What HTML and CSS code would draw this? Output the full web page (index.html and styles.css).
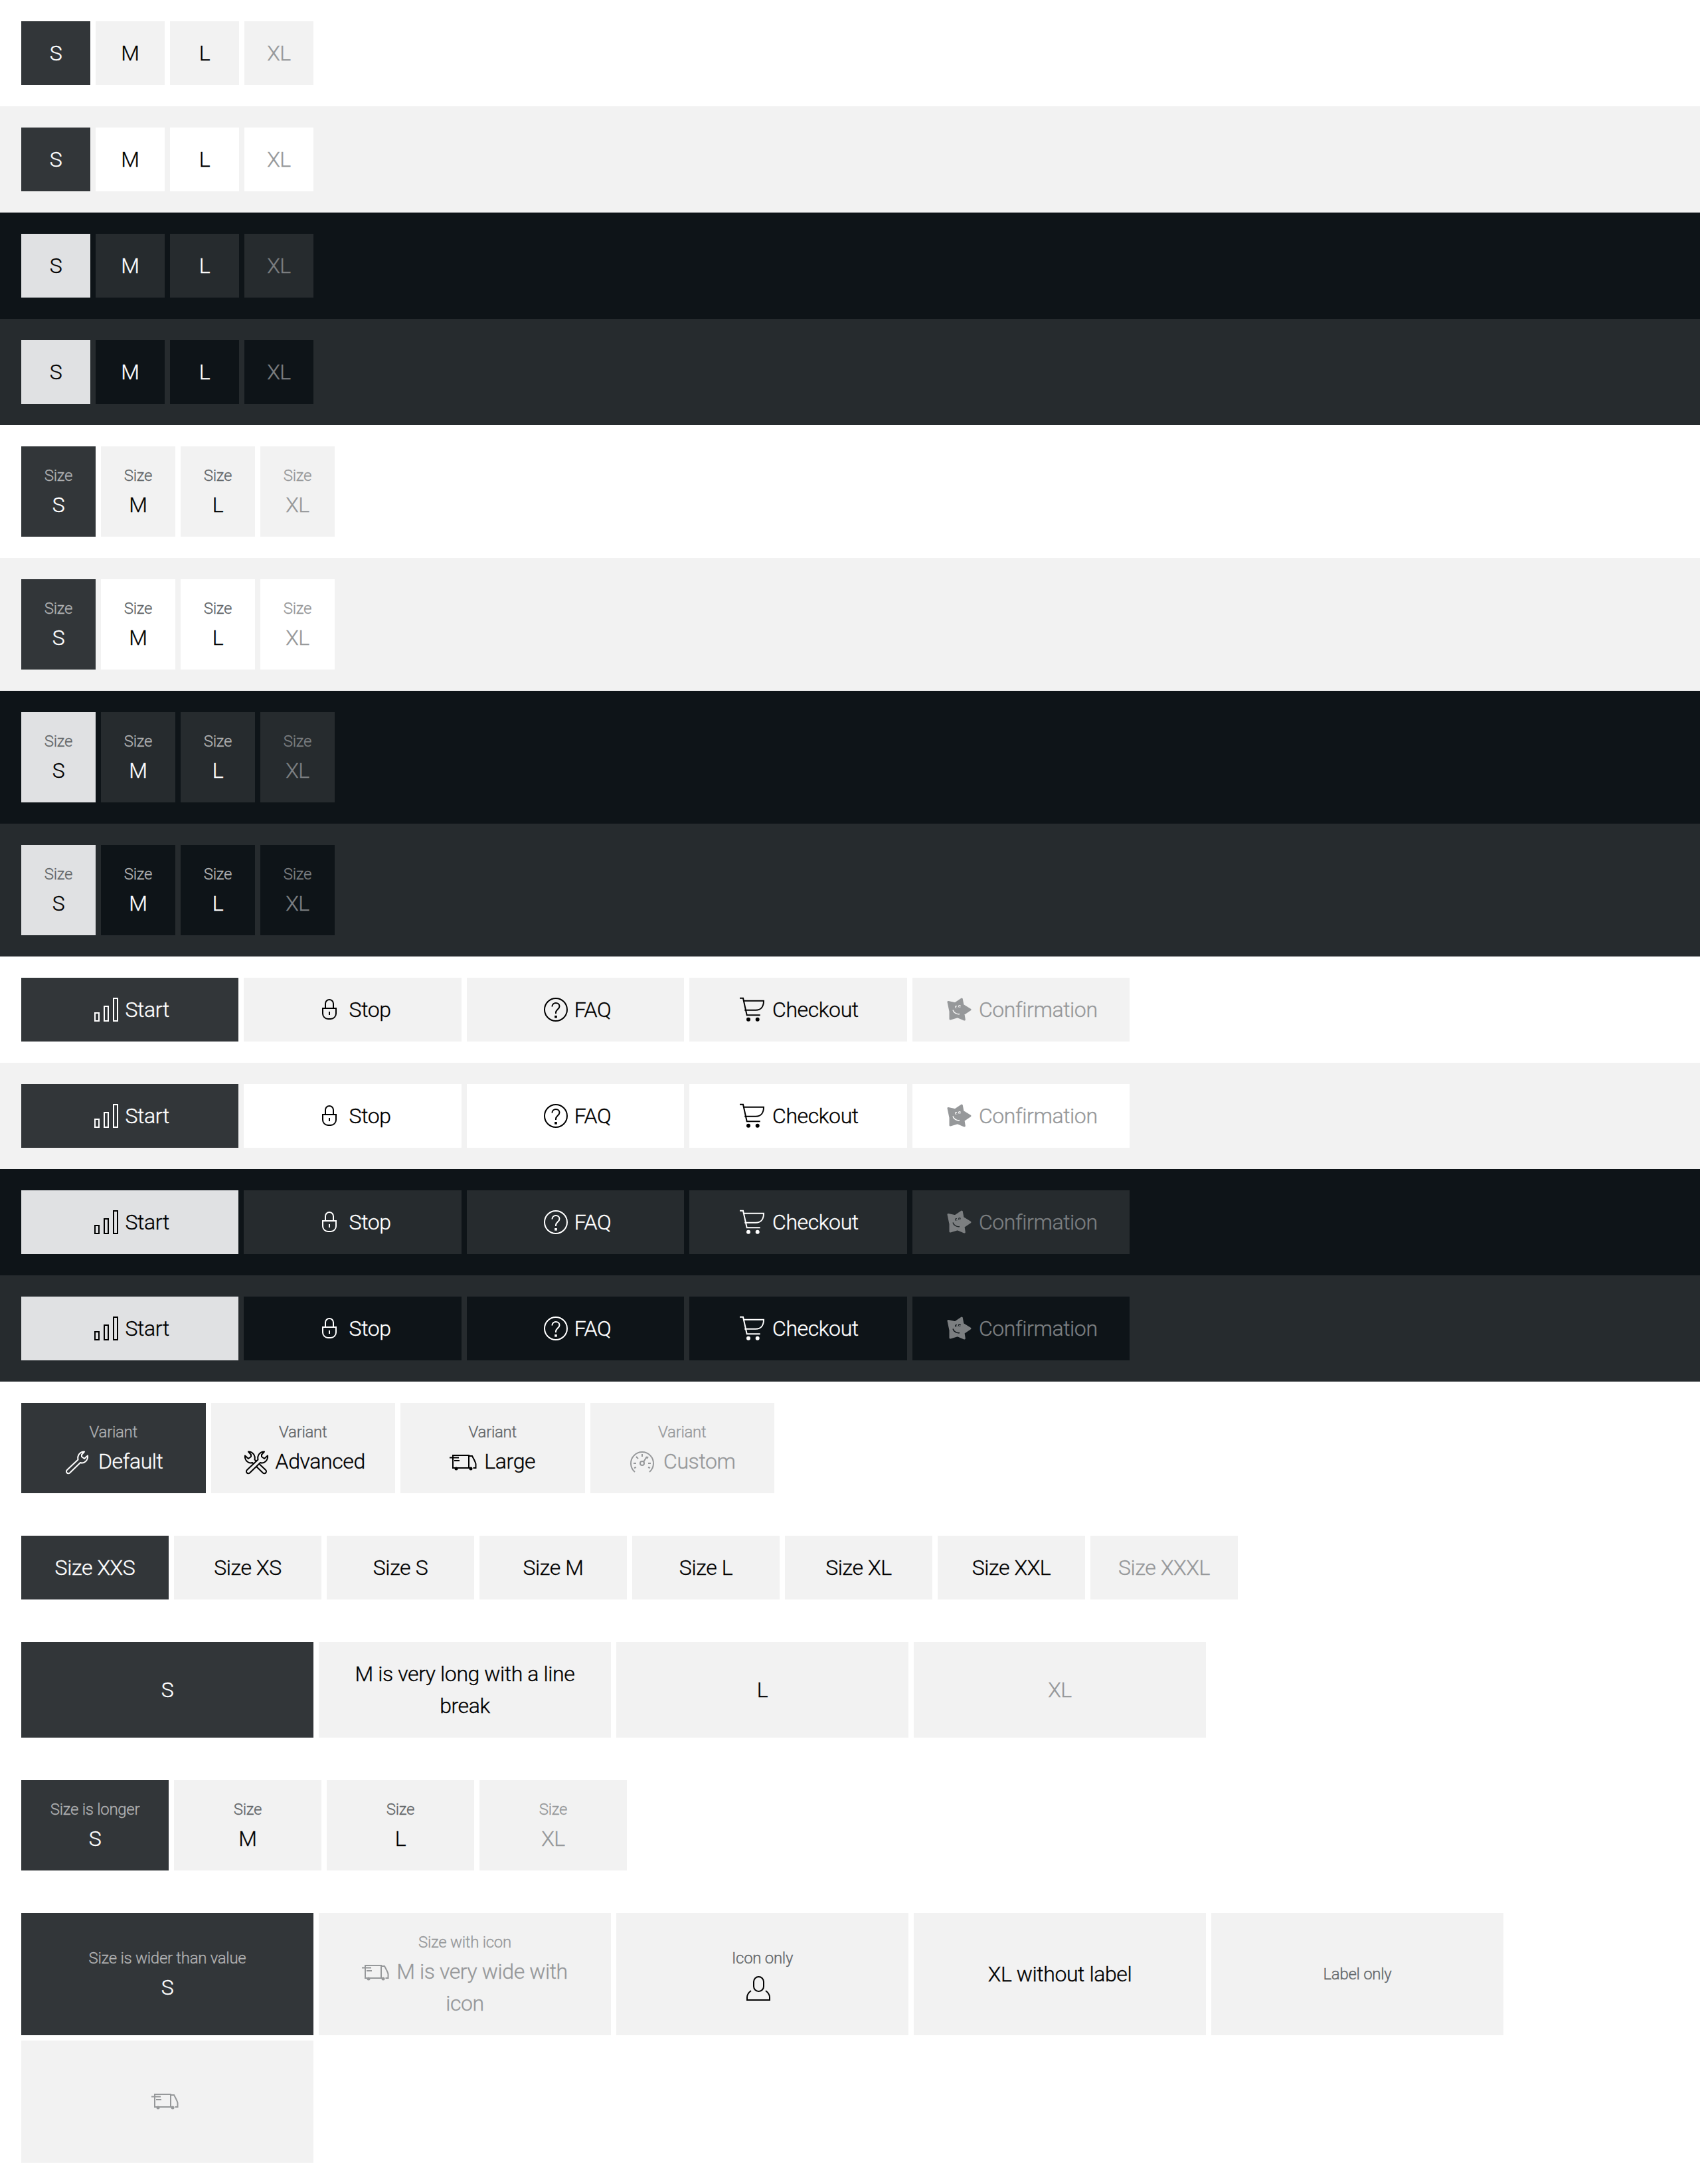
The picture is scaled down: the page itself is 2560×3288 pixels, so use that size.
FILE: index.html

```html
<!DOCTYPE html>
<html>
<head>
  <title>Segmented controls</title>
  <link rel="stylesheet" href="styles.css">
</head>
<body>
  <svg class="sprite" xmlns="http://www.w3.org/2000/svg">
    <symbol id="i-bars" viewBox="0 0 48 48"><rect x="6" y="29" width="6" height="12"/><rect x="20" y="19" width="6" height="22"/><rect x="34" y="7" width="6" height="34"/></symbol>
    <symbol id="i-lock" viewBox="0 0 48 48"><path d="M12 22h20v8a8 8 0 0 1-8 8h-4a8 8 0 0 1-8-8z"/><path d="M16 22v-7a6 6 0 0 1 12 0v7"/><path d="M22 27v5"/></symbol>
    <symbol id="i-help" viewBox="0 0 48 48"><circle cx="24" cy="24" r="17"/><path d="M18.500 19.500c0-3.500 2.500-5.500 5.500-5.500s5.500 2 5.500 5c0 4.500-5.500 4.500-5.500 9.500v1.500"/><path class="solid" d="M22.200 33h3.600v3.600h-3.600z"/></symbol>
    <symbol id="i-cart" viewBox="0 0 48 48"><path d="M3 6.700h5l5.700 25.600h20"/><path d="M8.700 10.700H39c0 7-3 14-12 14H10.300"/><circle class="solid" cx="16" cy="38.700" r="3"/><circle class="solid" cx="29.700" cy="38.700" r="3"/></symbol>
    <symbol id="i-star" viewBox="0 0 48 48"><path class="star" d="M6 12.500l10.300 2.200L26.300 8l1.700 9.300L39 24l-10 6.700 1.300 8.300-10.600-4.300L9 38V26.700z"/><circle class="hole" cx="18" cy="20" r="3"/><circle class="hole" cx="23" cy="19" r="3"/><circle class="solid" cx="18.500" cy="20.500" r="1.200"/><circle class="solid" cx="23.500" cy="19.500" r="1.200"/><path class="smile" d="M13 24.500c1 4 6 7 10 6"/></symbol>
    <symbol id="i-wrench" viewBox="0 0 48 48"><path class="hole" d="M5 37l16.500-15.500C20 15 25 9 31 9.500L27 14v3l4 3 5-4.500c1 6.500-5 12.500-11 10.500L9 41.500a3 3 0 0 1-4-4.500z"/></symbol>
    <symbol id="i-tools" viewBox="0 0 48 48"><path class="hole" transform="matrix(-1 0 0 1 42 0)" d="M5 37l16.500-15.500C20 15 25 9 31 9.500L27 14v3l4 3 5-4.500c1 6.500-5 12.500-11 10.500L9 41.500a3 3 0 0 1-4-4.500z"/><path class="hole" transform="translate(4 0)" d="M5 37l16.500-15.500C20 15 25 9 31 9.500L27 14v3l4 3 5-4.500c1 6.500-5 12.500-11 10.500L9 41.500a3 3 0 0 1-4-4.500z"/></symbol>
    <symbol id="i-truck" viewBox="0 0 48 48"><path d="M0 18.500h14M5 18.500V15h24v19M5 18.500V34h27M7 23h8"/><path d="M29 16h5c2 4 5 9 5.500 12v6h-4"/><circle class="solid" cx="10" cy="35" r="2.500"/><circle class="solid" cx="32" cy="35" r="2.500"/></symbol>
    <symbol id="i-gauge" viewBox="0 0 48 48"><path d="M9 40a17 17 0 1 1 22 0"/><path d="M20 13v4M11 17l3 3M7 27h4M29 17l-2 3M33 27h-4M8 34l3-1M32 34l-3-1"/><circle cx="20" cy="27" r="3"/><path d="M22 25l5-8"/></symbol>
    <symbol id="i-user" viewBox="0 0 48 48"><rect x="13" y="8" width="15" height="22" rx="7.500"/><path d="M9 29c-4 3-6 7-6 10v4h34v-4c0-3-2-7-6-10"/></symbol>
  </svg>

  <!-- plain values -->
  <section class="row theme-light"><div class="group cols-basic">
    <button class="btn is-selected">S</button><button class="btn">M</button><button class="btn">L</button><button class="btn is-disabled">XL</button>
  </div></section>
  <section class="row theme-light-surface"><div class="group cols-basic">
    <button class="btn is-selected">S</button><button class="btn">M</button><button class="btn">L</button><button class="btn is-disabled">XL</button>
  </div></section>
  <section class="row theme-dark"><div class="group cols-basic">
    <button class="btn is-selected">S</button><button class="btn">M</button><button class="btn">L</button><button class="btn is-disabled">XL</button>
  </div></section>
  <section class="row theme-dark-surface"><div class="group cols-basic">
    <button class="btn is-selected">S</button><button class="btn">M</button><button class="btn">L</button><button class="btn is-disabled">XL</button>
  </div></section>

  <!-- with label -->
  <section class="row theme-light"><div class="group cols-label">
    <button class="btn has-label is-selected"><span class="label">Size</span>S</button><button class="btn has-label"><span class="label">Size</span>M</button><button class="btn has-label"><span class="label">Size</span>L</button><button class="btn has-label is-disabled"><span class="label">Size</span>XL</button>
  </div></section>
  <section class="row theme-light-surface"><div class="group cols-label">
    <button class="btn has-label is-selected"><span class="label">Size</span>S</button><button class="btn has-label"><span class="label">Size</span>M</button><button class="btn has-label"><span class="label">Size</span>L</button><button class="btn has-label is-disabled"><span class="label">Size</span>XL</button>
  </div></section>
  <section class="row theme-dark"><div class="group cols-label">
    <button class="btn has-label is-selected"><span class="label">Size</span>S</button><button class="btn has-label"><span class="label">Size</span>M</button><button class="btn has-label"><span class="label">Size</span>L</button><button class="btn has-label is-disabled"><span class="label">Size</span>XL</button>
  </div></section>
  <section class="row theme-dark-surface"><div class="group cols-label">
    <button class="btn has-label is-selected"><span class="label">Size</span>S</button><button class="btn has-label"><span class="label">Size</span>M</button><button class="btn has-label"><span class="label">Size</span>L</button><button class="btn has-label is-disabled"><span class="label">Size</span>XL</button>
  </div></section>

  <!-- with icon -->
  <section class="row theme-light"><div class="group cols-icon">
    <button class="btn is-selected"><svg class="icon"><use href="#i-bars"/></svg>Start</button><button class="btn"><svg class="icon"><use href="#i-lock"/></svg>Stop</button><button class="btn"><svg class="icon"><use href="#i-help"/></svg>FAQ</button><button class="btn"><svg class="icon"><use href="#i-cart"/></svg>Checkout</button><button class="btn is-disabled"><svg class="icon"><use href="#i-star"/></svg>Confirmation</button>
  </div></section>
  <section class="row theme-light-surface"><div class="group cols-icon">
    <button class="btn is-selected"><svg class="icon"><use href="#i-bars"/></svg>Start</button><button class="btn"><svg class="icon"><use href="#i-lock"/></svg>Stop</button><button class="btn"><svg class="icon"><use href="#i-help"/></svg>FAQ</button><button class="btn"><svg class="icon"><use href="#i-cart"/></svg>Checkout</button><button class="btn is-disabled"><svg class="icon"><use href="#i-star"/></svg>Confirmation</button>
  </div></section>
  <section class="row theme-dark"><div class="group cols-icon">
    <button class="btn is-selected"><svg class="icon"><use href="#i-bars"/></svg>Start</button><button class="btn"><svg class="icon"><use href="#i-lock"/></svg>Stop</button><button class="btn"><svg class="icon"><use href="#i-help"/></svg>FAQ</button><button class="btn"><svg class="icon"><use href="#i-cart"/></svg>Checkout</button><button class="btn is-disabled"><svg class="icon"><use href="#i-star"/></svg>Confirmation</button>
  </div></section>
  <section class="row theme-dark-surface"><div class="group cols-icon">
    <button class="btn is-selected"><svg class="icon"><use href="#i-bars"/></svg>Start</button><button class="btn"><svg class="icon"><use href="#i-lock"/></svg>Stop</button><button class="btn"><svg class="icon"><use href="#i-help"/></svg>FAQ</button><button class="btn"><svg class="icon"><use href="#i-cart"/></svg>Checkout</button><button class="btn is-disabled"><svg class="icon"><use href="#i-star"/></svg>Confirmation</button>
  </div></section>

  <!-- variants and edge cases -->
  <section class="row theme-light"><div class="group cols-variant">
    <button class="btn has-label is-selected"><span class="label">Variant</span><svg class="icon"><use href="#i-wrench"/></svg>Default</button>
    <button class="btn has-label"><span class="label">Variant</span><svg class="icon"><use href="#i-tools"/></svg>Advanced</button>
    <button class="btn has-label"><span class="label">Variant</span><svg class="icon"><use href="#i-truck"/></svg>Large</button>
    <button class="btn has-label is-disabled"><span class="label">Variant</span><svg class="icon"><use href="#i-gauge"/></svg>Custom</button>
  </div></section>
  <section class="row theme-light"><div class="group cols-size">
    <button class="btn is-selected">Size XXS</button><button class="btn">Size XS</button><button class="btn">Size S</button><button class="btn">Size M</button><button class="btn">Size L</button><button class="btn">Size XL</button><button class="btn">Size XXL</button><button class="btn is-disabled">Size XXXL</button>
  </div></section>
  <section class="row theme-light"><div class="group cols-wide">
    <button class="btn is-selected">S</button><button class="btn">M is very long with a line break</button><button class="btn">L</button><button class="btn is-disabled">XL</button>
  </div></section>
  <section class="row theme-light"><div class="group cols-size">
    <button class="btn has-label is-selected"><span class="label">Size is longer</span>S</button><button class="btn has-label"><span class="label">Size</span>M</button><button class="btn has-label"><span class="label">Size</span>L</button><button class="btn has-label is-disabled"><span class="label">Size</span>XL</button>
  </div></section>
  <section class="row theme-light"><div class="group cols-wide wrap-five">
    <button class="btn has-label is-selected"><span class="label">Size is wider than value</span>S</button>
    <button class="btn has-label is-disabled"><span class="label">Size with icon</span><svg class="icon"><use href="#i-truck"/></svg>M is very wide with icon</button>
    <button class="btn has-label"><span class="label">Icon only</span><svg class="icon"><use href="#i-user"/></svg></button>
    <button class="btn">XL without label</button>
    <button class="btn has-label"><span class="label">Label only</span></button>
    <button class="btn is-disabled"><svg class="icon icon-alone"><use href="#i-truck"/></svg></button>
  </div></section>
</body>
</html>
```

FILE: styles.css

```css
* { box-sizing: border-box; }
body { margin: 0; font-family: Roboto, "Liberation Sans", sans-serif; }
.sprite { display: none; }

.row { padding: 32px; background: var(--canvas); }
.theme-light { --canvas: #fff; --bg: #f2f2f2; --fg: #000; --sel-bg: #323639; --sel-fg: #fff; --muted: #626669; --sel-muted: #b0b1b2; --off: #96989a; }
.theme-light-surface { --canvas: #f2f2f2; --bg: #fff; --fg: #000; --sel-bg: #323639; --sel-fg: #fff; --muted: #626669; --sel-muted: #b0b1b2; --off: #96989a; }
.theme-dark { --canvas: #0e1418; --bg: #262b2e; --fg: #fff; --sel-bg: #e0e1e3; --sel-fg: #000; --muted: #b0b1b2; --sel-muted: #626669; --off: #7c7f81; }
.theme-dark-surface { --canvas: #262b2e; --bg: #0e1418; --fg: #fff; --sel-bg: #e0e1e3; --sel-fg: #000; --muted: #b0b1b2; --sel-muted: #626669; --off: #7c7f81; }

.group { display: grid; gap: 8px; grid-auto-rows: 1fr; }
.cols-basic { grid-template-columns: repeat(4, 104px); }
.cols-label { grid-template-columns: repeat(4, 112px); }
.cols-icon { grid-template-columns: repeat(5, 327.4px); }
.cols-variant { grid-template-columns: repeat(4, 277.5px); }
.cols-size { grid-template-columns: repeat(8, 222px); }
.cols-wide { grid-template-columns: repeat(4, 440px); }
.wrap-five { grid-template-columns: repeat(5, 440px); }

.btn {
  --text: var(--fg);
  --text-muted: var(--muted);
  --face: var(--bg);
  display: block;
  padding: 24px 8px;
  border: 0;
  background: var(--face);
  color: var(--text);
  font: 300 32px/48px Roboto, "Liberation Sans", sans-serif;
  letter-spacing: -0.4px;
  -webkit-text-stroke: 0.35px currentColor;
  text-align: center;
}
.btn.has-label { padding: 26px 8px 24px; }
.cols-wide .btn { padding-left: 40px; padding-right: 40px; }
.btn.is-selected { --face: var(--sel-bg); --text: var(--sel-fg); --text-muted: var(--sel-muted); }
.btn.is-disabled { --text: var(--off); --text-muted: var(--off); }

.label { display: block; margin-bottom: 2px; color: var(--text-muted); font-size: 24px; line-height: 36px; letter-spacing: -0.3px; }

.icon {
  display: inline-block;
  width: 48px;
  height: 48px;
  margin-right: 4px;
  vertical-align: top;
  fill: none;
  stroke: currentColor;
  stroke-width: 2;
}
.icon-alone { margin: 0 0 4px; }
.solid { fill: currentColor; stroke: none; }
.star { fill: currentColor; stroke-width: 3; stroke-linejoin: round; }
.hole { fill: var(--face); stroke-linejoin: round; }
.smile { stroke: var(--face); stroke-width: 1.5; }
```
